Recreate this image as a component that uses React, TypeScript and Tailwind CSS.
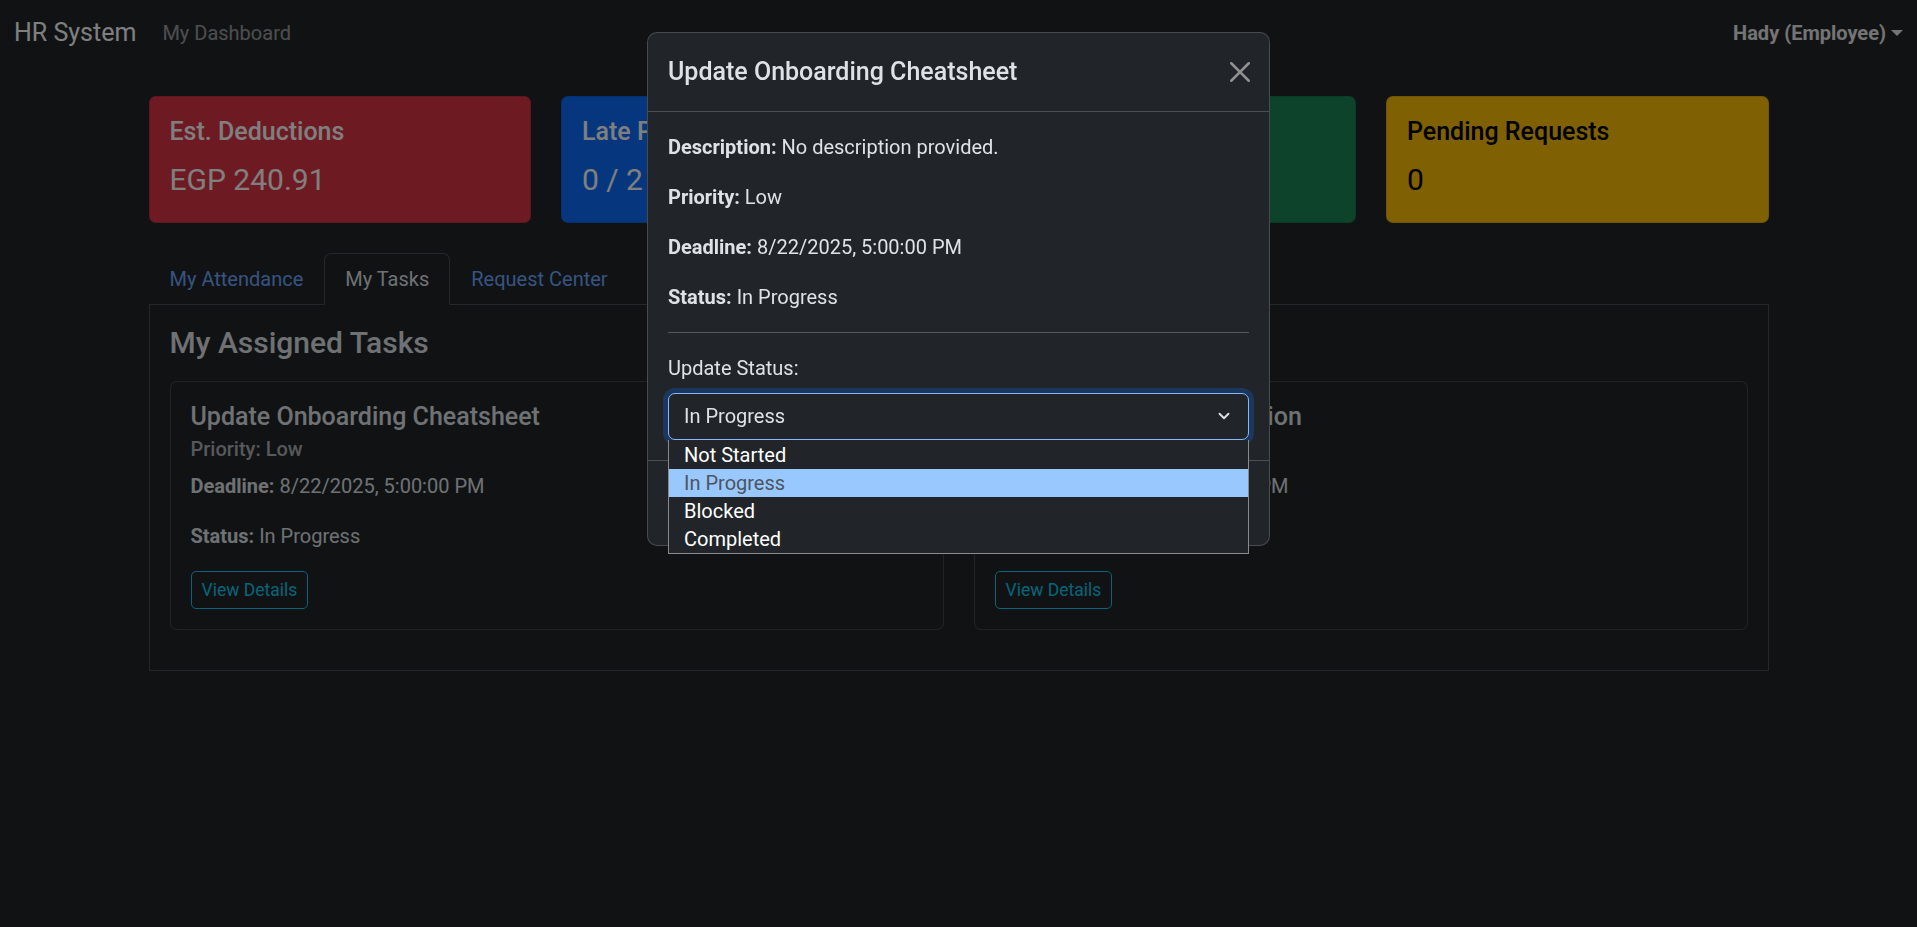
import { ChevronDown } from "lucide-react";

const statCards = [
  { title: "Est. Deductions", value: "EGP 240.91", bg: "bg-[#dc3545]", text: "text-white" },
  { title: "Late Permissions", value: "0 / 2", bg: "bg-[#0d6efd]", text: "text-white" },
  { title: "Completed Tasks", value: "1", bg: "bg-[#198754]", text: "text-white" },
  { title: "Pending Requests", value: "0", bg: "bg-[#ffc107]", text: "text-black" },
];

const tabs = ["My Attendance", "My Tasks", "Request Center", "My Profile"];

const tasks = [
  {
    title: "Update Onboarding Cheatsheet",
    priority: "Low",
    deadline: "8/22/2025, 5:00:00 PM",
    status: "In Progress",
  },
  {
    title: "Prepare Client Presentation",
    priority: "Medium",
    deadline: "8/25/2025, 5:00:00 PM",
    status: "Not Started",
  },
];

const statusOptions = ["Not Started", "In Progress", "Blocked", "Completed"];

function CloseIcon() {
  return (
    <svg viewBox="0 0 16 16" className="h-[20px] w-[20px] fill-white opacity-50">
      <path d="M.293.293a1 1 0 0 1 1.414 0L8 6.586 14.293.293a1 1 0 1 1 1.414 1.414L9.414 8l6.293 6.293a1 1 0 0 1-1.414 1.414L8 9.414l-6.293 6.293a1 1 0 0 1-1.414-1.414L6.586 8 .293 1.707a1 1 0 0 1 0-1.414z" />
    </svg>
  );
}

export default function App() {
  return (
    <div className="min-h-screen bg-[#212529] font-[Roboto,sans-serif] text-[20px] leading-[1.5] text-[#dee2e6]">
      {/* Navbar */}
      <nav className="flex h-[66px] items-center justify-between px-[14px]">
        <div className="flex items-center">
          <span className="mr-[18px] text-[25px] text-white">HR System</span>
          <a className="px-[8px] text-white/55">My Dashboard</a>
        </div>
        <div className="flex items-center font-bold text-white/90">
          <span>Hady (Employee)</span>
          <span className="ml-[5px] h-0 w-0 border-x-[6px] border-t-[6px] border-x-transparent border-t-current" />
        </div>
      </nav>

      <main className="mx-auto mt-[30px] max-w-[1650px] px-[15px]">
        {/* Stat cards */}
        <div className="grid grid-cols-4 gap-[30px]">
          {statCards.map((c) => (
            <div
              key={c.title}
              className={`rounded-[7px] border border-black/10 p-[20px] ${c.bg} ${c.text}`}
            >
              <h5 className="mb-[10px] text-[25px] leading-[1.2] font-medium">{c.title}</h5>
              <p className="text-[30px] leading-[1.5]">{c.value}</p>
            </div>
          ))}
        </div>

        {/* Tabs */}
        <ul className="mt-[30px] flex border-b border-[#495057]">
          {tabs.map((t) => (
            <li key={t} className="-mb-px">
              <a
                className={
                  t === "My Tasks"
                    ? "block rounded-t-[7px] border border-[#495057] border-b-[#212529] bg-[#212529] px-[20px] py-[10px] text-[#dee2e6]"
                    : "block rounded-t-[7px] border border-transparent px-[20px] py-[10px] text-[#6ea8fe]"
                }
              >
                {t}
              </a>
            </li>
          ))}
        </ul>

        <div className="border border-t-0 border-[#495057] p-[20px] pb-[40px]">
          <h4 className="mb-[20px] text-[30px] leading-[1.2] font-medium">My Assigned Tasks</h4>
          <div className="grid grid-cols-2 gap-[30px]">
            {tasks.map((task) => (
              <div key={task.title} className="rounded-[7px] border border-white/15 bg-[#212529] p-[20px]">
                <h5 className="mb-[5px] text-[25px] leading-[1.2] font-medium">{task.title}</h5>
                <h6 className="mb-[10px] text-[20px] leading-[1.2] font-medium text-[#dee2e6]/75">
                  Priority: {task.priority}
                </h6>
                <p className="mb-[20px]">
                  <strong className="font-bold">Deadline:</strong> {task.deadline}
                </p>
                <p className="mb-[20px]">
                  <strong className="font-bold">Status:</strong> {task.status}
                </p>
                <button className="rounded-[5px] border border-[#0dcaf0] px-[10px] py-[5px] text-[17.5px] leading-[1.5] text-[#0dcaf0]">
                  View Details
                </button>
              </div>
            ))}
          </div>
        </div>
      </main>

      {/* Modal backdrop */}
      <div className="fixed inset-0 bg-black/50" />

      {/* Modal */}
      <div className="fixed inset-0 flex items-start justify-center pt-[32px]">
        <div className="w-[623px] rounded-[10px] border border-white/[0.175] bg-[#212529]">
          <div className="flex items-center justify-between border-b border-[#495057] p-[20px]">
            <h5 className="text-[25px] leading-[1.5] font-medium">Update Onboarding Cheatsheet</h5>
            <button className="-mr-[6px] p-[5px]">
              <CloseIcon />
            </button>
          </div>

          <div className="p-[20px]">
            <p className="mb-[20px]">
              <strong className="font-bold">Description:</strong> No description provided.
            </p>
            <p className="mb-[20px]">
              <strong className="font-bold">Priority:</strong> Low
            </p>
            <p className="mb-[20px]">
              <strong className="font-bold">Deadline:</strong> 8/22/2025, 5:00:00 PM
            </p>
            <p className="mb-[20px]">
              <strong className="font-bold">Status:</strong> In Progress
            </p>
            <hr className="my-[20px] border-t border-[#56595d]" />
            <label className="mb-[10px] block">Update Status:</label>

            <div className="relative">
              <div className="flex h-[47px] items-center justify-between rounded-[7px] border border-[#86b7fe] bg-[#212529] pl-[15px] pr-[15px] shadow-[0_0_0_5px_rgba(13,110,253,0.25)]">
                <span>In Progress</span>
                <ChevronDown className="h-[18px] w-[18px] text-[#dee2e6]" strokeWidth={2.5} />
              </div>

              {/* Open native list */}
              <ul className="absolute left-0 right-0 top-full z-10 border border-t-0 border-[#8a8a8a] bg-[#212529] pt-[1px]">
                {statusOptions.map((o) => (
                  <li
                    key={o}
                    className={
                      o === "In Progress"
                        ? "h-[28px] bg-[#99c8ff] pl-[15px] leading-[28px] text-[#4d5560]"
                        : "h-[28px] pl-[15px] leading-[28px] text-white"
                    }
                  >
                    {o}
                  </li>
                ))}
              </ul>
            </div>
          </div>

          <div className="flex justify-end border-t border-[#495057] p-[15px]">
            <button className="m-[5px] rounded-[7px] bg-[#6c757d] px-[15px] py-[7px] text-white">Close</button>
            <button className="m-[5px] rounded-[7px] bg-[#0d6efd] px-[15px] py-[7px] text-white">
              Save Status
            </button>
          </div>
        </div>
      </div>
    </div>
  );
}
